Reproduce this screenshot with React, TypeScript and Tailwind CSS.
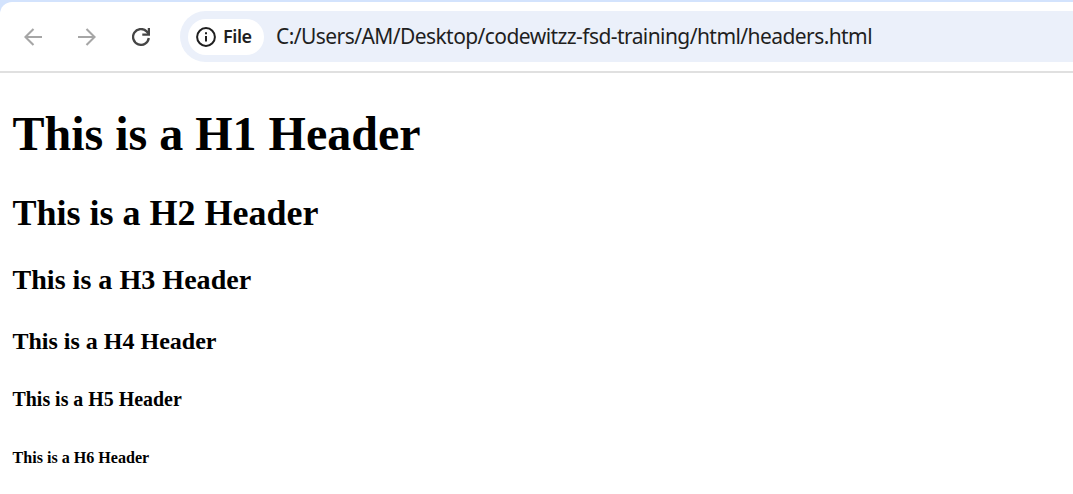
function BackIcon() {
  return (
    <svg width="18" height="18" viewBox="0 0 18 18" fill="none" stroke="#a6a6a6" strokeWidth="2.1">
      <path d="M18 9H1.8M9.5 0.9L1.4 9L9.5 17.1" />
    </svg>
  );
}

function ForwardIcon() {
  return (
    <svg width="18" height="18" viewBox="0 0 18 18" fill="none" stroke="#a6a6a6" strokeWidth="2.1">
      <path d="M0 9H16.2M8.5 0.9L16.6 9L8.5 17.1" />
    </svg>
  );
}

function ReloadIcon() {
  return (
    <svg width="18" height="18" viewBox="0 0 18 18" fill="none" stroke="#454545" strokeWidth="2.3">
      <path d="M16.8 10A7.9 7.9 0 1 1 14.6 3.4L17 6" />
      <path d="M16.9 0V6.6H10.3" />
    </svg>
  );
}

function InfoIcon() {
  return (
    <svg width="20" height="20" viewBox="0 0 20 20" fill="none" stroke="#1f1f1f" strokeWidth="2">
      <circle cx="10" cy="10" r="8.9" />
      <path d="M10 9V14.6M10 5.2V7.3" />
    </svg>
  );
}

export default function App() {
  return (
    <div className="h-[494px] w-full overflow-hidden bg-[#d3e3fd]">
      <div className="h-full pt-0.5">
        <div className="h-full rounded-tl-[12px] bg-white">
          <header className="flex h-[71px] items-start border-b-2 border-[#e0e0e0] pt-[9px]">
            <nav className="flex h-[51px] w-[180px] shrink-0 items-center gap-9 pl-6">
              <BackIcon />
              <ForwardIcon />
              <ReloadIcon />
            </nav>
            <div className="flex h-[51px] flex-1 items-center rounded-l-full bg-[#ebf0fa] pl-2 font-['Noto_Sans','Open_Sans',sans-serif] text-[#1f1f1f]">
              <div className="flex h-[36px] w-[76px] shrink-0 items-center gap-[7px] rounded-full bg-white pl-2">
                <InfoIcon />
                <span className="pb-0.5 text-[18px] leading-6 font-semibold tracking-[-0.45px]">File</span>
              </div>
              <span className="ml-3 pb-px text-[21px] leading-7 tracking-[-0.57px] whitespace-nowrap">
                C:/Users/AM/Desktop/codewitzz-fsd-training/html/headers.html
              </span>
            </div>
          </header>
          <main className="flow-root pt-px pl-[12.5px] font-['Liberation_Serif',serif] font-bold text-black">
            <h1 className="my-[0.67em] text-[48px] leading-[55px] font-bold">This is a H1 Header</h1>
            <h2 className="my-[0.83em] text-[36px] leading-[41px] font-bold">This is a H2 Header</h2>
            <h3 className="my-[1em] text-[28.08px] leading-[32px] font-bold">This is a H3 Header</h3>
            <h4 className="my-[1.33em] text-[24px] leading-[27px] font-bold">This is a H4 Header</h4>
            <h5 className="my-[1.67em] text-[19.92px] leading-[23px] font-bold">This is a H5 Header</h5>
            <h6 className="my-[2.33em] text-[16.08px] leading-[18px] font-bold">This is a H6 Header</h6>
          </main>
        </div>
      </div>
    </div>
  );
}
